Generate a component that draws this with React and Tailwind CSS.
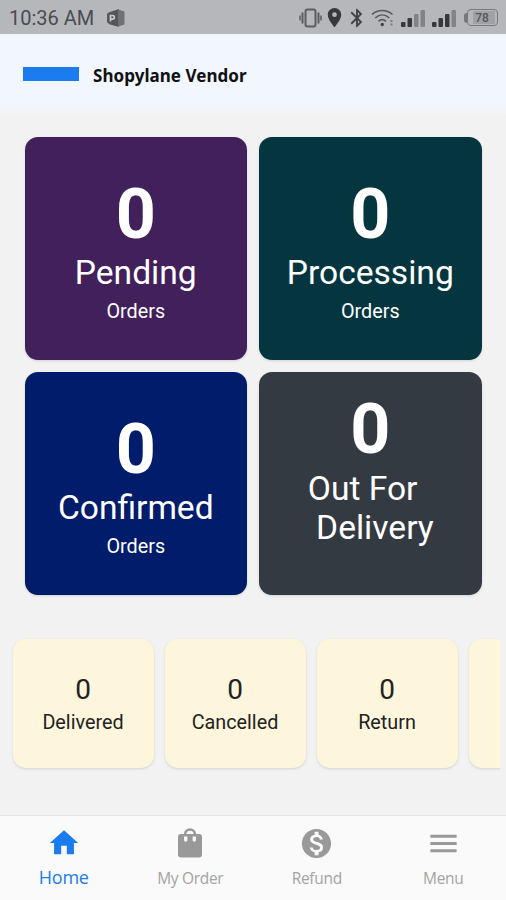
import React from "react";
import { MdHome, MdMenu, MdMonetizationOn, MdLocationOn, MdBluetooth } from "react-icons/md";

const orders = [
  { title: "Pending", color: "bg-[#42205b]" },
  { title: "Processing", color: "bg-[#053640]" },
  { title: "Confirmed", color: "bg-[#001c6b]" },
];

const totals = ["Delivered", "Cancelled", "Return", ""];

function VibrateIcon() {
  return (
    <svg width="23" height="20" viewBox="0 0 23 20" fill="none" stroke="#5c5d61">
      <rect x="6.5" y="1.5" width="10" height="17" rx="2" strokeWidth="2" />
      <path d="M3.500 4.500v11M19.500 4.500v11" strokeWidth="2" />
      <path d="M1 7.500v5M22 7.500v5" strokeWidth="1.500" />
    </svg>
  );
}

function WifiIcon() {
  return (
    <svg width="24" height="18" viewBox="0 0 24 18" fill="none" stroke="#58595c">
      <path d="M1 5.500C7 .2 15.500 .2 21.500 5.500" strokeWidth="1.600" />
      <path d="M4.200 9C8.500 5 14 5 18.300 9" strokeWidth="1.600" />
      <path d="M7.500 12.300C10 10 12.500 10 15 12.300" strokeWidth="1.600" />
      <circle cx="11.300" cy="15.500" r="1.700" fill="#444549" stroke="none" />
      <path d="M20.500 11v2M20.500 14.500v2" strokeWidth="2" stroke="#7d7e81" />
    </svg>
  );
}

function SignalIcon({ level }) {
  const bars = [
    { x: 0, y: 13, h: 5 },
    { x: 6.5, y: 9, h: 9 },
    { x: 13, y: 5, h: 13 },
    { x: 19.5, y: 1, h: 17 },
  ];
  return (
    <svg width="25" height="18" viewBox="0 0 25 18">
      {bars.map((b, i) => (
        <rect
          key={b.x}
          x={b.x}
          y={b.y}
          width="4.500"
          height={b.h}
          rx="1"
          fill={i < level ? "#37383c" : "#828387"}
        />
      ))}
    </svg>
  );
}

function OfficeIcon() {
  return (
    <svg width="18" height="18" viewBox="0 0 18 18">
      <path d="M1.500 3.500 12 0v18L1.500 15z" fill="#55565a" />
      <path d="M11 .5 17.500 2.500v13L11 17.500z" fill="#707174" />
      <rect x="0" y="4" width="9.500" height="10" rx="1.500" fill="#55565a" />
      <path d="M3.500 12.500V6.500h2a1.800 1.800 0 0 1 0 3.700h-2" fill="none" stroke="#c8c9cd" strokeWidth="1.700" />
    </svg>
  );
}

function BagIcon() {
  return (
    <svg width="26" height="30" viewBox="0 0 26 30">
      <rect x="1" y="6" width="24" height="23.500" rx="3" fill="#999" />
      <path d="M8 9V6.500a5 5 0 0 1 10 0V9" fill="none" stroke="#999" strokeWidth="2.400" />
      <path
        d="M7 8.500h3.400V12a1.700 1.700 0 0 1-3.400 0zM15.600 8.500H19V12a1.700 1.700 0 0 1-3.400 0z"
        fill="#fafafa"
      />
    </svg>
  );
}

function StatusBar() {
  return (
    <div className="flex h-[34px] shrink-0 items-center bg-[#b6b7bb] pl-[9px] pr-[8px] pt-[1px]">
      <span className="w-[98px] whitespace-nowrap text-[20px] text-[#4b4c50]">10:36 AM</span>
      <OfficeIcon />
      <div className="ml-auto flex items-center">
        <VibrateIcon />
        <MdLocationOn className="ml-px size-[23px] text-[#37383c]" />
        <MdBluetooth className="size-[22px] text-[#404145]" />
        <div className="ml-[3px] flex items-center gap-[6px]">
          <WifiIcon />
          <SignalIcon level={2} />
          <SignalIcon level={3} />
        </div>
        <div className="ml-[7px] flex items-center">
          <div className="h-[10px] w-[3px] rounded-l bg-[#77787b]"></div>
          <div className="flex h-[17px] w-[31px] items-center justify-center rounded-[4px] border-[1.5px] border-[#77787b] py-[1px] pl-[5px] pr-[2px]">
            <span className="flex h-full w-full items-center justify-center bg-[#a0a1a5] pr-[4px] text-[12px] font-medium text-[#55565a]">
              78
            </span>
          </div>
        </div>
      </div>
    </div>
  );
}

function Tab({ icon, label, active }) {
  return (
    <div className="flex flex-1 flex-col items-center pl-[1px] pt-[11px]">
      <div className="flex h-[32px] items-center justify-center">{icon}</div>
      <span
        className={
          active
            ? "mt-[5px] font-['Open_Sans',sans-serif] text-[18px] leading-[26px] tracking-[-0.2px] text-[#1a7cee]"
            : "mt-[6px] font-['Open_Sans',sans-serif] text-[15.5px] leading-[26px] tracking-[-0.3px] text-[#a3a3a3]"
        }
      >
        {label}
      </span>
    </div>
  );
}

function App() {
  return (
    <div className="flex h-[900px] w-[506px] flex-col overflow-hidden bg-[#f2f2f2] font-[Roboto,sans-serif]">
      <StatusBar />
      <div className="flex h-[80px] shrink-0 items-center bg-linear-to-b from-[#f2f6ff] from-85% to-[#f2f3f5] pl-[23px]">
        <div className="h-[14px] w-[56px] bg-[#1a7cee]"></div>
        <h1 className="ml-[14px] mt-[3px] font-['Noto_Sans',sans-serif] text-[17px] font-bold tracking-[0.05px] text-[#111]">
          Shopylane Vendor
        </h1>
      </div>

      <div className="mt-[23px] grid shrink-0 grid-cols-2 gap-[12px] px-[24.5px]">
        {orders.map((order) => (
          <div
            key={order.title}
            className={`flex h-[223px] flex-col items-center rounded-[13px] pt-[37px] text-white shadow ${order.color}`}
          >
            <span className="text-[70px] font-bold leading-[80px]">0</span>
            <span className="-mt-[1px] text-[33.6px] leading-[40px]">{order.title}</span>
            <span className="mt-[7px] text-[19.8px] leading-[24px]">Orders</span>
          </div>
        ))}
        <div className="flex h-[223px] flex-col items-center rounded-[13px] bg-[#343a41] pt-[17px] text-white shadow">
          <span className="text-[70px] font-bold leading-[80px]">0</span>
          <span className="whitespace-pre pl-[1px] text-[33.6px] leading-[39px]">{"Out For\n Delivery"}</span>
        </div>
      </div>

      <div className="mt-[41px] mr-[6px] flex h-[140px] shrink-0 gap-[11px] overflow-hidden pl-[13px] pt-[3px]">
        {totals.map((title) => (
          <div
            key={title}
            className="flex h-[129px] w-[141px] shrink-0 flex-col items-center rounded-[13px] bg-[#fdf6dc] pr-[1px] pt-[34px] text-[#222] shadow"
          >
            {title && (
              <>
                <span className="text-[28px] leading-[33px]">0</span>
                <span className="mt-[5px] text-[19.8px] leading-[24px]">{title}</span>
              </>
            )}
          </div>
        ))}
      </div>

      <div className="mt-auto flex h-[85px] shrink-0 border-t border-[#e6e6e6] bg-[#fafafa]">
        <Tab label="Home" active icon={<MdHome className="size-[34px] text-[#1a7cee]" />} />
        <Tab label="My Order" icon={<BagIcon />} />
        <Tab label="Refund" icon={<MdMonetizationOn className="size-[35px] text-[#999]" />} />
        <Tab label="Menu" icon={<MdMenu className="size-[35px] text-[#999]" />} />
      </div>
    </div>
  );
}

export default App;
